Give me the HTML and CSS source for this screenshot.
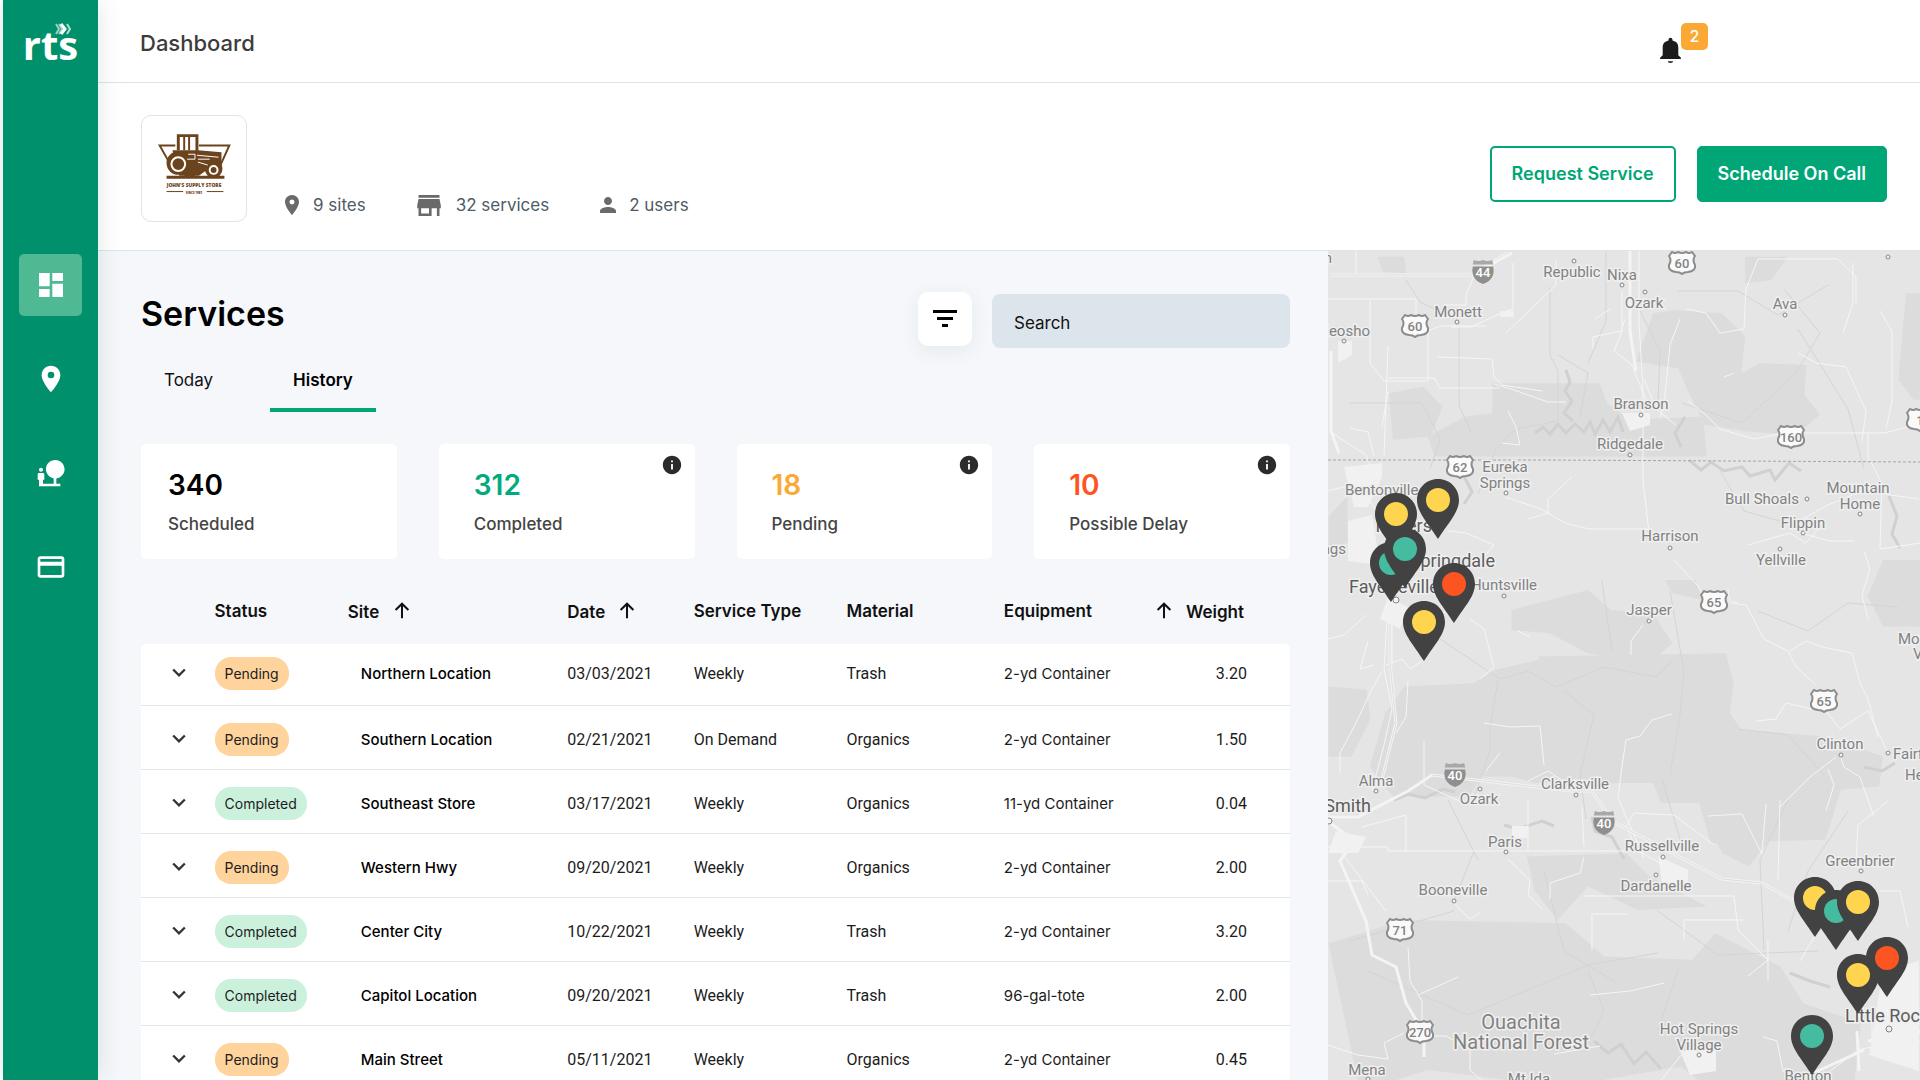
FILE: index.html
```html
<!DOCTYPE html>
<html lang="en">
<head>
    <meta charset="UTF-8">
    <meta name="viewport" content="width=device-width, initial-scale=1.0">
    <title>RTS - Dashboard</title>
    <link rel="stylesheet" href="styles.css">
</head>
<body>
    <!-- Shared icons -->
    <svg class="sprite" aria-hidden="true">
        <symbol id="i-pin" viewBox="0 0 24 24"><path d="M12 2C8.130 2 5 5.130 5 9c0 5.250 7 13 7 13s7-7.750 7-13c0-3.870-3.130-7-7-7zm0 9.500a2.500 2.500 0 0 1 0-5 2.500 2.500 0 0 1 0 5z"/></symbol>
        <symbol id="i-up" viewBox="0 0 24 24"><path d="M12 20V4M5 11l7-7 7 7" fill="none" stroke="currentColor" stroke-width="2.200"/></symbol>
        <symbol id="i-down" viewBox="0 0 24 24"><path d="M7 9l5 5 5-5" fill="none" stroke="currentColor" stroke-width="2"/></symbol>
        <symbol id="i-info" viewBox="0 0 24 24"><path d="M12 2C6.480 2 2 6.480 2 12s4.480 10 10 10 10-4.480 10-10S17.520 2 12 2zm1 15h-2v-6h2v6zm0-8h-2V7h2v2z"/></symbol>
        <symbol id="m-pin" viewBox="0 0 42 60"><path d="M21 0C9 0 0 9.500 0 21c0 12 10 22 21 39 11-17 21-27 21-39C42 9.500 33 0 21 0z" fill="#424242"/><circle cx="21" cy="21" r="12" fill="currentColor"/></symbol>
        <symbol id="m-us" viewBox="0 0 28 24"><path d="M4 1q3 2 6 0 4 2 8 0 3 2 6 0l3 4q-3 4 0 9 1 6-7 7-4 0-6 2-2-2-6-2-8-1-7-7 3-5 0-9z" fill="#fafafa" stroke="#8c8c8c" stroke-width="2"/></symbol>
        <symbol id="m-int" viewBox="0 0 24 26"><path d="M2 0q5 2 10 0 5 2 10 0l1 5H1z" fill="#a8a8a8"/><path d="M1 7h22q3 14-11 19Q-2 21 1 7z" fill="#8f8f8f"/></symbol>
    </svg>

    <div class="app">
        <aside class="sidebar">
            <a href="#" class="brand">rts
                <svg class="brand-mark" viewBox="0 0 17 12"><path d="M1 1l3 5-3 5M4 1l3 5-3 5" opacity=".6"/><path d="M6 1l4 5-4 5" stroke-width="3"/><path d="M12 1l3 5-3 5" opacity=".7"/></svg>
            </a>
            <nav class="side-nav">
                <a href="#dashboard" class="active" aria-label="Dashboard"><svg viewBox="0 0 24 24"><path d="M3 13h8V3H3v10zm0 8h8v-6H3v6zm10 0h8V11h-8v10zm0-18v6h8V3h-8z"/></svg></a>
                <a href="#sites" aria-label="Sites"><svg><use href="#i-pin"/></svg></a>
                <a href="#sustainability" aria-label="Sustainability"><svg viewBox="0 0 24 24"><path d="M22.170 9.170c0-3.870-3.130-7-7-7s-7 3.130-7 7A6.980 6.980 0 0 0 14 16.060V20H6v-3h1v-4c0-.55-.45-1-1-1H3c-.55 0-1 .45-1 1v4h1v5h16v-2h-3v-3.880c3.470-.52 6.170-3.500 6.170-6.950zM4.500 11c.83 0 1.500-.67 1.500-1.500S5.330 8 4.500 8 3 8.670 3 9.500 3.670 11 4.500 11z"/></svg></a>
                <a href="#billing" aria-label="Billing"><svg viewBox="0 0 24 24"><path d="M20 4H4c-1.110 0-1.990.89-1.990 2L2 18c0 1.110.89 2 2 2h16c1.110 0 2-.89 2-2V6c0-1.110-.89-2-2-2zm0 14H4v-7h16v7zm0-10H4V6h16v2z"/></svg></a>
            </nav>
        </aside>

        <div class="page">
            <header class="topbar">
                <h1>Dashboard</h1>
                <button class="bell" aria-label="Notifications">
                    <svg viewBox="4 2 16 20"><path d="M12 22c1.100 0 2-.5 2-1.300h-4c0 .8.890 1.300 2 1.300zm6-6v-6c0-3.070-1.640-4.640-4.500-5.320V4c0-.83-.67-1.500-1.500-1.500s-1.500.67-1.500 1.500v.68C7.630 5.360 6 6.920 6 10v6l-2 2v1h16v-1l-2-2z"/></svg>
                    <span class="badge">2</span>
                </button>
            </header>

            <section class="company">
                <div class="company-logo">
                    <svg viewBox="0 0 106 106" aria-label="John's Supply Store">
                        <g fill="none" stroke="#6b431c" stroke-width="2">
                            <path d="M34 30H18l9 16M58 30h31l-9 20"/>
                            <path d="M37 35V20h19v17" stroke-width="3"/>
                            <path d="M43 21v14M48 21v14"/>
                        </g>
                        <g fill="#6b431c">
                            <path d="M31 35h26l24 2v14l-5 3-10 1-8 6H38z"/>
                            <circle cx="37" cy="48" r="12"/><circle cx="73" cy="54" r="9"/>
                            <path d="M47 54h12l-5 7H43zM25 61h59v3H25z"/>
                        </g>
                        <circle cx="37" cy="49" r="7" fill="none" stroke="#fff" stroke-width="2"/>
                        <circle cx="73" cy="55" r="4" fill="none" stroke="#fff" stroke-width="2"/>
                        <path d="M56 40l22 2M57 44h12M57 47l10 3M47 39h7v5h-8" fill="none" stroke="#fff"/>
                        <text class="logo-name" x="53" y="72">JOHN'S SUPPLY STORE</text>
                        <text class="logo-since" x="53" y="79">SINCE 1981</text>
                        <path d="M25 77h17M66 77h17" stroke="#6b431c"/>
                    </svg>
                </div>
                <ul class="company-facts">
                    <li><svg><use href="#i-pin"/></svg>9 sites</li>
                    <li><svg class="shop" viewBox="3 4 18 16"><path d="M20 4H4v2h16V4zm1 10v-2l-1-5H4l-1 5v2h1v6h10v-6h4v6h2v-6h1zm-9 4H6v-4h6v4z"/></svg>32 services</li>
                    <li><svg viewBox="0 0 24 24"><path d="M12 12c2.210 0 4-1.790 4-4s-1.790-4-4-4-4 1.790-4 4 1.790 4 4 4zm0 2c-2.670 0-8 1.340-8 4v2h16v-2c0-2.660-5.330-4-8-4z"/></svg>2 users</li>
                </ul>
                <div class="company-actions">
                    <button class="button outline">Request Service</button>
                    <button class="button">Schedule On Call</button>
                </div>
            </section>

            <div class="content">
                <main class="services">
                    <div class="services-head">
                        <h2>Services</h2>
                        <button class="filter" aria-label="Filter"><svg viewBox="0 0 24 18"><path d="M0 0h24v3H0zM4 7h16v3H4zM9 14h6v3H9z"/></svg></button>
                        <input type="search" class="search" placeholder="Search" aria-label="Search">
                    </div>

                    <nav class="tabs">
                        <a href="#today">Today</a>
                        <a href="#history" class="active">History</a>
                    </nav>

                    <div class="stats">
                        <div class="stat"><strong>340</strong><span>Scheduled</span></div>
                        <div class="stat done"><strong>312</strong><span>Completed</span><svg><use href="#i-info"/></svg></div>
                        <div class="stat pending"><strong>18</strong><span>Pending</span><svg><use href="#i-info"/></svg></div>
                        <div class="stat delay"><strong>10</strong><span>Possible Delay</span><svg><use href="#i-info"/></svg></div>
                    </div>

                    <table class="jobs">
                        <colgroup>
                            <col class="c-toggle"><col class="c-status"><col class="c-site"><col class="c-date">
                            <col class="c-type"><col class="c-material"><col class="c-equipment"><col>
                        </colgroup>
                        <thead>
                            <tr>
                                <th></th>
                                <th>Status</th>
                                <th>Site <svg><use href="#i-up"/></svg></th>
                                <th>Date <svg><use href="#i-up"/></svg></th>
                                <th>Service Type</th>
                                <th>Material</th>
                                <th>Equipment</th>
                                <th><svg><use href="#i-up"/></svg> Weight</th>
                            </tr>
                        </thead>
                        <tbody id="jobRows"></tbody>
                    </table>
                </main>

                <div class="map">
                    <svg viewBox="0 0 592 829" preserveAspectRatio="xMinYMin slice">
                        <rect width="1200" height="1700" fill="#e5e5e5"/>

                        <!-- Terrain -->
                        <g transform="translate(-8 -1) scale(.383 .333)" fill="#dcdcdc">
                            <path d="M450 400h280l20 60 60 50 190-10 10 120H300l-20-60 100-60 70-10zM870 190l60-10 120 10 60 70-10 110 50-30 120 5-5 90 40 60-60 60-130-10-110-20-40-90-30-80-110-20zM1530 130h70v320h-50l-40-60z"/>
                            <path d="M150 20l70 0 5 50-60-5zM1110 20l110 0-40 70-70 10zM180 430l90-20 50 60-30 90-100 10zM22 800l50-60 0 140-50 10z"/>
                        </g>
                        <g transform="translate(-8 289) scale(.383 .333)" fill="#dcdcdc">
                            <path d="M570 350l490-10 20 90-10 90 30 50 220 20 150 60-10 90-100 10-40 150-300 10-30-120-100 0-20-60H560l-60-20H420l-30 60-200 0-60-90 40-160 50-80 180-10 60-40 110-30zM22 440l100 10 10 90-50 110-60 0z"/>
                            <path d="M500 210l200-60 60 60 110 10 50 90-60 60-160-30-100-60-100-10zM1470 60h130v200h-130l-40-90zM900 120l80 0 20 60-80-20z"/>
                        </g>
                        <g transform="translate(-8 549) scale(.383 .333)" fill="#dcdcdc">
                            <path d="M540 170l260-10 60 70 150 90-180 10-130-70-80 100-60-90zM22 430l200-70 420 10 100 100 230 10 60-80 170 100 60 110 150 60-20 210 -350 10-100-90-200 40-80 60-180-60-200-30-160 60-20-10z"/>
                            <path d="M1000 10l180 0 0 100-60 90-70-40-40-90zM1100 600l150 20 60 220-300 10 60-140z"/>
                        </g>

                        <!-- Water -->
                        <g fill="none" stroke="#d0d0d0" stroke-width="3">
                            <path d="M238 119l4 12-5 9 7 10-8 12 9 8M207 182l8-6 7 7 8-10 8 9 9-9 9 8 6-10 5 12 8-14 7 12 8-15 5 15M357 166l-10 16 6 14M361 209l12 10 10-8 13 9 18-4 8 9 20-6 5 10 14-17 12 8M66 549l14-6 17 4 18-9 12 3M176 574l14 4 24-8 12 5M264 566l3 14 17 6 12 22M135 223l9 18-8 12M266 790l14 12 13-9 13 20 12-12 15 17M462 722l20 8 20 6M536 516l18 4 13-8M561 245l8 20-5 18 8 14"/>
                        </g>

                        <!-- County lines and small roads -->
                        <g fill="none" stroke="#d4d4d4">
                            <path d="M78 29l14 22 32 15M222 36v68l8 16 0 50-42 8-20 20-18 45M22 152h72l18 36-10 30M131 74l0 80 12 28M230 104l30 18-8 44M312 60l20 40-2 50M354 152l60 20 54-50 24-40-36-44M470 78l50 80 16 60M350 40l60 0 40 24 50-30"/>
                            <path d="M112 388l60 40 28-8 28 16 48-20 52 10 18-18M170 430l-8 46 0 24-18 52M342 340l14 80-4 44-10 60M236 440l30 24-14 60 6 44M410 478l50 6 36 40M278 0v70l-18 42M392 220l24 40 50 14M352 588l-18-60M430 360l50 20 40-28 50 4M284 400l-10-70"/>
                            <path d="M22 690l104-30M120 549l30 60M146 600l-20 50M216 620l20 80 50 30M260 720l16 40-20 40M350 719l-20 60M330 660l60 44 100-4M40 720l100 44 120-50 70-12M460 549l-28 60 4 90M520 560l-40 60-20 60"/>
                        </g>

                        <!-- Roads -->
                        <g fill="none" stroke="#f6f6f6" stroke-width="1">
                            <path d="M0 48h88v38M42 50v62l14 18 44 0 0-50 12-5 46 0M60 95l-4 110M60 127h46l6 10h60M28 0v24M185 12v46l-12 4-30 14-20 0M150 16l-12 28 0 10h-22M143 23l36-22M228 10l0 24-50 48M311 0v70l4 70 0 90 7 60M294 40v40l-8 20 18 14 16 40M267 68l15-10M265 98l0-12 28-6 4-12M358 58l20 4 14 20 24-4 2-40 12-30 80 0 18 18v26M525 12v40l-10 30M470 102l18 10 30 4 20 44-4 30M352 68l-10 26-6 60-4 12"/>
                            <path d="M166 133l20 6 34 12 18 0M60 140l-6 36M110 106l54 2 2 18 8 8 40 6M2 180l14 10 22 14 12 30M22 177l18 4 6 24M180 160l8 16 4 18-18-2M360 150l18 14 14 14 34 10 30-6 100 0 40-10M552 60l12 20 0 70-6 28M540 182l0 24 14 26-2 66 40-6M396 126l10-4M316 128l12 30 20 16"/>
                            <path d="M177 246l36 12 24 14 24 6h60M200 268l20-6 0-14 24-22M464 274l36-20 34-14 57 8M420 294l42-12 16 10 14-16M472 282l30 8 24 0M0 240l30-8 20 30M120 280l18 2 28 12-10 12M60 350l-4 68 8 40-8 36-12 46"/>
                            <path d="M64 350v64M94 410l-12 8-8-10-16 6M54 420l-12 22-14 30-16 30 0 20M40 390l-8 28 14-4M80 430l-2 36-10 16M110 366l24-18M142 368l14 10 10 38-14 12M190 380l12 6M0 388l16-4 22-20M346 309l24 26 12 24M400 338l2 14 16 2 18 34 24 12 8 16 20 18M303 404v-14l12-16M536 300l6 18-8 26 6 24M410 352l-6-2"/>
                            <path d="M156 472l26 4 30-1 4 39M344 463l-20 6-12 16-14 4-4 26-4 32 26 60M428 470l20-2 10-16 26 6M462 400l16-10 16 6 30 6 8 30 8 16 10 38M498 460l14 18 28-18 20 42M512 504l4 12 16 10 14 40M508 506l-26 20-30 30M500 518l6 16-8 26M96 490l0 44 44 20M172 502l-14 18M200 530l20-10 30 20"/>
                            <path d="M0 596h60l0 4h250l22 12M78 600l0-36-44 12M200 549v50M254 556l2 40M256 606l-4 16-30 10 0 16M180 608l22 22-2 14 14 14M126 652l16 16 10-6M310 600l-12-24 8-14 40 2 40 30M380 565l34-2 20 40 4-50M452 549l-2 80M560 550l-30 24-2 40M256 645h150l4 34 30 30-20 16M300 663l-36 0 0 36M356 689v-20h60M58 660l-46-60M0 630l34 0 6 14"/>
                            <path d="M262 744l40-4 34-8M80 696l2 34 12 20v24M90 744l40-18M92 785h26l24 14 0 20 22 20M0 794l30 10 30 4-4-16 20-10M272 795l-46 8M354 803l-24 30M440 690l0 40M435 786l14 4 6 30 30 20M508 650l-36 60M572 800l20-10M544 770v24M552 640l20 0 8 36M490 829l40-30 18-4"/>
                        </g>
                        <g fill="none" stroke="#f4f4f4" stroke-width="3">
                            <path d="M2 24l142 0 40-22M302 0v80l6 40M3 100v80l8 22M62 352v60l6 60-14 56M0 566h30l50-26 24-16 140 16 20 0 20 30 60 32 50 26 40 4 46 26 36 4M0 570l26 20-14 20 26 60 6 34 24 12 10 36 18 30v24M529 780l2 40M540 790l56-10M470 829l66-30"/>
                        </g>
                        <g fill="none" stroke="#dcdcdc">
                            <path d="M2 24h142M62 352v60l6 60-14 56M104 524l140 16 20 0 20 30 60 32 50 26 40 4 46 26"/>
                        </g>
                        <!-- Towns -->
                        <g fill="#f1f1f1">
                            <path d="M16 216l38-4 0 14-14 30-14 0zM20 270l24-6 8 50-32-4zM294 162l28 0 0 12-20 6zM60 346l20 10-8 22-20-10zM330 605l30 14 0 14-26-2zM352 800l36 0 0 20-26 4zM555 720l36-10v110l-50-16zM10 90h14v14l-14 8zM8 580l30 6-8 16h-30zM184 575h16v12h-16zM172 60h14v6h-14z"/>
                        </g>

                        <path d="M0 209h210l382 2" fill="none" stroke="#a5a5a5" stroke-dasharray="3 2"/>

                        <g class="dots">
                            <circle cx="246" cy="10" r="2"/><circle cx="294" cy="34" r="2"/><circle cx="317" cy="41" r="2"/><circle cx="457" cy="64" r="2"/>
                            <circle cx="129" cy="71" r="2"/><circle cx="16" cy="90" r="2"/><circle cx="313" cy="164" r="2"/><circle cx="302" cy="204" r="2"/>
                            <circle cx="178" cy="242" r="2"/><circle cx="479" cy="248" r="2"/><circle cx="532" cy="263" r="2"/><circle cx="475" cy="282" r="2"/>
                            <circle cx="342" cy="297" r="2"/><circle cx="560" cy="6" r="2"/><circle cx="452" cy="298" r="2"/><circle cx="176" cy="345" r="2"/>
                            <circle cx="68" cy="349" r="3"/><circle cx="321" cy="370" r="2"/><circle cx="513" cy="504" r="2"/><circle cx="560" cy="502" r="2"/>
                            <circle cx="48" cy="540" r="2"/><circle cx="152" cy="538" r="2"/><circle cx="248" cy="544" r="2"/><circle cx="1" cy="570" r="3"/>
                            <circle cx="178" cy="601" r="2"/><circle cx="335" cy="606" r="2"/><circle cx="533" cy="620" r="2"/><circle cx="328" cy="624" r="2"/>
                            <circle cx="126" cy="650" r="2"/><circle cx="371" cy="804" r="2"/><circle cx="561" cy="778" r="3"/><circle cx="40" cy="828" r="2"/>
                        </g>

                        <g class="labels">
                            <text class="end" x="4" y="12">Joplin</text>
                            <text x="244" y="26">Republic</text>
                            <text x="294" y="29">Nixa</text>
                            <text x="316" y="57">Ozark</text>
                            <text x="457" y="58">Ava</text>
                            <text x="130" y="66">Monett</text>
                            <text class="end" x="42" y="85">Neosho</text>
                            <text x="313" y="158">Branson</text>
                            <text x="302" y="198">Ridgedale</text>
                            <text x="177" y="221">Eureka</text>
                            <text x="177" y="237">Springs</text>
                            <text class="start" x="17" y="244">Bentonville</text>
                            <text class="start" x="397" y="253">Bull Shoals</text>
                            <text x="530" y="242">Mountain</text>
                            <text x="532" y="258">Home</text>
                            <text x="475" y="277">Flippin</text>
                            <text x="342" y="290">Harrison</text>
                            <text class="end" x="18" y="303">Springs</text>
                            <text x="453" y="314">Yellville</text>
                            <text class="end" x="209" y="339">Huntsville</text>
                            <text x="321" y="364">Jasper</text>
                            <text class="start" x="570" y="393">Mountain</text>
                            <text class="start" x="585" y="408">View</text>
                            <text x="512" y="498">Clinton</text>
                            <text class="start" x="565" y="508">Fairfield</text>
                            <text class="start" x="577" y="529">Heber</text>
                            <text x="48" y="535">Alma</text>
                            <text x="151" y="553">Ozark</text>
                            <text x="247" y="538">Clarksville</text>
                            <text x="177" y="596">Paris</text>
                            <text x="334" y="600">Russellville</text>
                            <text x="532" y="615">Greenbrier</text>
                            <text x="125" y="644">Booneville</text>
                            <text x="328" y="640">Dardanelle</text>
                            <text x="371" y="783">Hot Springs</text>
                            <text x="371" y="799">Village</text>
                            <text x="39" y="824">Mena</text>
                            <text x="201" y="833">Mt Ida</text>
                            <text x="480" y="830">Benton</text>
                            <text class="forest" x="193" y="778">Ouachita</text>
                            <text class="forest" x="193" y="798">National Forest</text>
                            <text class="city end" x="104" y="281">Rogers</text>
                            <text class="city end" x="167" y="316">Springdale</text>
                            <text class="city start" x="21" y="342">Fayetteville</text>
                            <text class="city end" x="43" y="561">Fort Smith</text>
                            <text class="city start" x="517" y="771">Little Rock</text>
                        </g>
                        <g class="shields" id="shields"></g>
                        <g id="pins"></g>
                    </svg>
                </div>
            </div>
        </div>
    </div>

    <script src="script.js"></script>
</body>
</html>
```

FILE: styles.css
```css
:root {
    --green: #00a676;
    --sidebar: #00906b;
    --line: #dbe5ec;
    --surface: #f5f7fb;
    --orange: #fba834;
    --red: #fd5521;
}

* {
    box-sizing: border-box;
    margin: 0;
    padding: 0;
}

body {
    background: #fff;
    color: #111;
    font-family: Inter, "Liberation Sans", sans-serif;
    font-size: 17px;
    overflow: hidden;
}

button,
input {
    font: inherit;
    border: none;
}

button {
    cursor: pointer;
}

a {
    color: inherit;
    text-decoration: none;
}

svg {
    display: block;
    fill: currentColor;
}

.sprite {
    display: none;
}

.app {
    display: flex;
    height: 100vh;
    padding-left: 3px;
}

/* Sidebar */
.sidebar {
    flex: none;
    width: 95px;
    background: var(--sidebar);
    color: #fff;
    box-shadow: 0 0 24px rgba(0, 60, 40, 0.12);
    z-index: 1;
}

.brand {
    position: relative;
    display: block;
    height: 254px;
    padding-top: 15px;
    text-align: center;
    font: 700 40px/60px "Open Sans", sans-serif;
}

.brand-mark {
    position: absolute;
    top: 23px;
    left: 52px;
    width: 17px;
    height: 12px;
    fill: none;
    stroke: #fff;
    stroke-width: 2;
}

.side-nav {
    display: flex;
    flex-direction: column;
    align-items: center;
    gap: 32px;
}

.side-nav a {
    display: flex;
    align-items: center;
    justify-content: center;
    width: 63px;
    height: 62px;
    border-radius: 5px;
}

.side-nav a.active {
    background: #4eb993;
}

.side-nav svg {
    width: 32px;
    height: 32px;
}

/* Header */
.page {
    flex: 1;
    min-width: 0;
    display: flex;
    flex-direction: column;
}

.topbar {
    display: flex;
    align-items: center;
    justify-content: space-between;
    height: 83px;
    padding: 4px 212px 0 42px;
    border-bottom: 1px solid var(--line);
}

h1 {
    font-size: 22px;
    font-weight: 500;
    color: #3c3c3c;
}

.bell {
    display: flex;
    align-items: flex-end;
    height: 40px;
    background: none;
    color: #1c1c1c;
}

.bell svg {
    width: 21px;
    height: 26px;
}

.badge {
    align-self: flex-start;
    width: 27px;
    border-radius: 5px;
    background: var(--orange);
    color: #fff;
    font-size: 16px;
    font-weight: 500;
    line-height: 27px;
}

.company {
    display: flex;
    align-items: center;
    height: 168px;
    padding: 4px 33px 0 43px;
    border-bottom: 1px solid var(--line);
}

.company-logo {
    width: 106px;
    height: 107px;
    border: 1px solid var(--line);
    border-radius: 10px;
}

.company-logo text {
    fill: #6b431c;
    text-anchor: middle;
    font-family: "Open Sans", sans-serif;
    font-weight: 800;
}

.logo-name {
    font-size: 5px;
}

.logo-since {
    font-size: 3px;
}

.company-facts {
    display: flex;
    align-self: flex-end;
    gap: 46px;
    margin: 0 auto 33px 32px;
    list-style: none;
    color: #4f5b66;
}

.company-facts li {
    display: flex;
    align-items: center;
    gap: 8px;
}

.company-facts svg {
    width: 26px;
    height: 24px;
    color: #6a6a6a;
}

.company-facts .shop {
    height: 21px;
    margin: 0 6px 0 4px;
}

.company-actions {
    display: flex;
    gap: 21px;
    margin-top: 10px;
}

.button {
    height: 56px;
    padding: 0 20px;
    border: 1px solid var(--green);
    border-radius: 5px;
    background: var(--green);
    color: #fff;
    font-size: 18px;
    font-weight: 600;
}

.button.outline {
    border-width: 2px;
    background: #fff;
    color: var(--green);
}

/* Services */
.content {
    flex: 1;
    min-height: 0;
    display: grid;
    grid-template-columns: 1230fr 592fr;
}

.services {
    min-width: 0;
    padding: 41px 38px 0 43px;
    background: var(--surface);
    overflow: hidden;
}

.services-head {
    display: flex;
    gap: 20px;
    height: 56px;
}

h2 {
    margin-right: auto;
    font-size: 34px;
    font-weight: 600;
    line-height: 44px;
    color: #000;
}

.filter {
    display: flex;
    align-items: center;
    justify-content: center;
    width: 54px;
    height: 54px;
    border-radius: 10px;
    background: #fff;
    box-shadow: 0 5px 20px rgba(0, 90, 60, 0.08);
}

.filter svg {
    width: 24px;
    height: 18px;
}

.search {
    width: 298px;
    height: 54px;
    margin-top: 2px;
    padding: 4px 22px 0;
    border-radius: 8px;
    background: #dde5ec;
}

.search::placeholder {
    color: #111;
    opacity: 1;
}

.tabs {
    display: flex;
    gap: 34px;
    margin-top: 7px;
    color: #111;
}

.tabs a {
    height: 57px;
    padding: 0 23px;
    line-height: 50px;
    border-bottom: 4px solid transparent;
}

.tabs .active {
    border-color: var(--green);
    font-weight: 600;
    color: #000;
}

.stats {
    display: grid;
    grid-template-columns: repeat(4, 1fr);
    gap: 42px;
    margin-top: 32px;
}

.stat {
    position: relative;
    display: flex;
    flex-direction: column;
    gap: 8px;
    height: 115px;
    padding: 24px 27px;
    border-radius: 5px;
    background: #fff;
}

.stat strong {
    font-size: 28px;
    font-weight: 600;
    line-height: 34px;
    color: #000;
}

.stat span {
    line-height: 28px;
    font-weight: 500;
    color: #444;
}

.stat svg {
    position: absolute;
    top: 10px;
    right: 12px;
    width: 22px;
    height: 22px;
    color: #2b2b2b;
}

.stat.done,
.stat.pending,
.stat.delay {
    padding-left: 35px;
}

.stat.done strong {
    color: #00ab7e;
}

.stat.pending strong {
    color: var(--orange);
}

.stat.delay strong {
    color: var(--red);
}

/* Table */
.jobs {
    width: 100%;
    margin-top: 18px;
    table-layout: fixed;
    border-collapse: separate;
    border-spacing: 0;
}

.c-toggle { width: 6.4%; }
.c-status { width: 11.6%; }
.c-site { width: 19.1%; }
.c-date { width: 11%; }
.c-type { width: 13.3%; }
.c-material { width: 13.7%; }
.c-equipment { width: 12%; }

.jobs th {
    height: 67px;
    text-align: left;
    font-weight: 600;
    white-space: nowrap;
}

.jobs th svg {
    display: inline-block;
    width: 22px;
    height: 22px;
    margin: 0 7px;
    vertical-align: -4px;
}

.jobs td {
    height: 64px;
    padding-top: 3px;
    border-bottom: 1px solid var(--line);
    background: #fff;
    font-family: Roboto, sans-serif;
    font-size: 16px;
    color: #1c1c1c;
}

.jobs tr:first-child td {
    height: 62px;
    padding: 0 0 3px;
}

.jobs tr:first-child td:first-child {
    border-top-left-radius: 5px;
}

.jobs tr:first-child td:last-child {
    border-top-right-radius: 5px;
}

.jobs tr th:last-child {
    padding-right: 46px;
    text-align: right;
}

.jobs tr td:last-child,
.jobs tr:first-child td:last-child {
    padding-right: 43px;
    text-align: right;
}

.jobs tr td.site,
.jobs tr:first-child td.site {
    padding-left: 13px;
    font: 500 15px Inter, sans-serif;
    color: #000;
}

.jobs td.equipment {
    font: 15px Inter, sans-serif;
}

.expand {
    display: block;
    margin-left: 24px;
    background: none;
    color: #333;
}

.expand svg {
    width: 28px;
    height: 28px;
}

.pill {
    display: inline-block;
    padding: 0 10px;
    border-radius: 16px;
    background: #ffd39c;
    font-family: Inter, sans-serif;
    font-size: 14px;
    line-height: 33px;
}

.pill.completed {
    background: #cbf1dc;
}

/* Map */
.map {
    min-width: 0;
    overflow: hidden;
    background: #e5e5e5;
}

.map > svg {
    width: 100%;
    height: 100%;
}

.dots circle {
    fill: #f2f2f2;
    stroke: #858585;
}

.labels text,
.shields text {
    font-family: Roboto, sans-serif;
    font-size: 15px;
    text-anchor: middle;
    fill: #828282;
    stroke: #efefef;
    stroke-width: 3px;
    paint-order: stroke;
}

.labels .start { text-anchor: start; }
.labels .end { text-anchor: end; }

.labels .city {
    font-size: 18px;
    fill: #5c5c5c;
}

.labels .forest {
    font-size: 20px;
}

.shields text {
    font-size: 13px;
    font-weight: 500;
    stroke: none;
}

.shields .interstate {
    fill: #fff;
}
```

FILE: script.js
```js
const jobs = [
    ['Pending', 'Northern Location', '03/03/2021', 'Weekly', 'Trash', '2-yd Container', '3.20'],
    ['Pending', 'Southern Location', '02/21/2021', 'On Demand', 'Organics', '2-yd Container', '1.50'],
    ['Completed', 'Southeast Store', '03/17/2021', 'Weekly', 'Organics', '11-yd Container', '0.04'],
    ['Pending', 'Western Hwy', '09/20/2021', 'Weekly', 'Organics', '2-yd Container', '2.00'],
    ['Completed', 'Center City', '10/22/2021', 'Weekly', 'Trash', '2-yd Container', '3.20'],
    ['Completed', 'Capitol Location', '09/20/2021', 'Weekly', 'Trash', '96-gal-tote', '2.00'],
    ['Pending', 'Main Street', '05/11/2021', 'Weekly', 'Organics', '2-yd Container', '0.45']
];

document.getElementById('jobRows').innerHTML = jobs.map(([status, site, date, type, material, equipment, weight]) => `
    <tr>
        <td><button class="expand" aria-label="Show details"><svg><use href="#i-down"/></svg></button></td>
        <td><span class="pill ${status.toLowerCase()}">${status}</span></td>
        <td class="site">${site}</td>
        <td>${date}</td>
        <td>${type}</td>
        <td>${material}</td>
        <td class="equipment">${equipment}</td>
        <td>${weight}</td>
    </tr>
`).join('');

// Center of each road shield
const shields = [
    ['us', 354, 12, '60'], ['us', 87, 75, '60'], ['us', 132, 216, '62'], ['us', 463, 186, '160'],
    ['us', 592, 169, '1'], ['us', 386, 351, '65'], ['us', 496, 450, '65'], ['us', 72, 679, '71'],
    ['us', 92, 781, '270'], ['int', 155, 21, '44'], ['int', 127, 524, '40'], ['int', 276, 572, '40']
];

document.getElementById('shields').innerHTML = shields.map(([kind, x, y, label]) => `
    <use href="#m-${kind}" x="${x - 14}" y="${y - 12}" width="28" height="24"/>
    <text x="${x}" y="${y + 5}" class="${kind === 'int' ? 'interstate' : ''}">${label}</text>
`).join('');

// Tip x and top y of each pin, drawn back to front
const colors = { yellow: '#ffd54f', green: '#45bb9f', red: '#fd5521' };
const pins = [
    [110, 228, 'yellow'], [68, 242, 'yellow'], [63, 291, 'green'], [77, 277, 'green'],
    [126, 312, 'red'], [96, 350, 'yellow'], [487, 626, 'yellow'], [508, 639, 'green'],
    [530, 630, 'yellow'], [559, 686, 'red'], [530, 703, 'yellow'], [484, 764, 'green']
];

document.getElementById('pins').innerHTML = pins.map(([x, y, color]) => `
    <use href="#m-pin" x="${x - 21}" y="${y}" width="42" height="60" color="${colors[color]}"/>
`).join('');
```
